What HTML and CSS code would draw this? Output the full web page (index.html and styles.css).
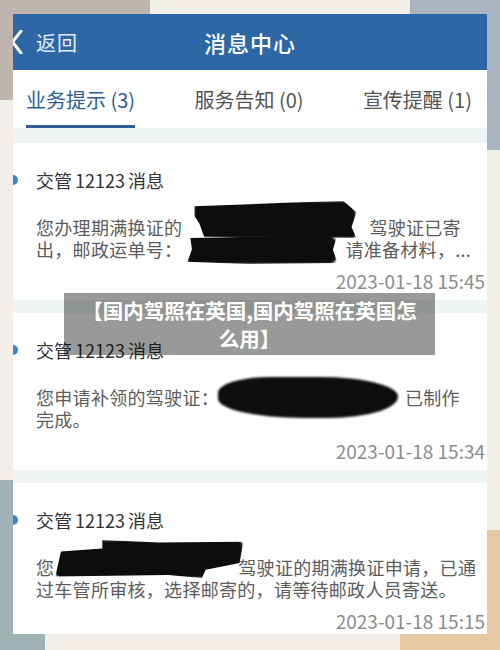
FILE: index.html
```html
<!DOCTYPE html>
<html lang="zh-CN">
<head>
    <meta charset="utf-8">
    <title>消息中心</title>
    <link rel="stylesheet" href="styles.css">
</head>
<body>
    <div class="phone">
        <header class="topbar">
            <div class="back">
                <svg class="chevron" width="12" height="24" viewBox="0 0 12 24">
                    <path d="M10 1 L1.5 12 L10 23" fill="none" stroke="#fff" stroke-width="3" stroke-linecap="round" stroke-linejoin="round"/>
                </svg>
                <span>返回</span>
            </div>
            <h1>消息中心</h1>
            <div></div>
        </header>

        <nav class="tabs">
            <div class="tab active">业务提示 (3)</div>
            <div class="tab">服务告知 (0)</div>
            <div class="tab">宣传提醒 (1)</div>
        </nav>

        <div class="list">
            <div class="card">
                <div class="card-title"><span class="dot"></span>交管 12123 消息</div>
                <div class="card-body">
                    <div class="line">您办理期满换证的<span class="redact r1a"></span>驾驶证已寄</div>
                    <div class="line">出，邮政运单号：<span class="redact r1b"></span>请准备材料，...</div>
                </div>
                <div class="time">2023-01-18 15:45</div>
            </div>

            <div class="card">
                <div class="card-title"><span class="dot"></span>交管 12123 消息</div>
                <div class="card-body">
                    <div class="line">您申请补领的驾驶证：<span class="redact r2"></span>已制作</div>
                    <div class="line">完成。</div>
                </div>
                <div class="time">2023-01-18 15:34</div>
            </div>

            <div class="card">
                <div class="card-title"><span class="dot"></span>交管 12123 消息</div>
                <div class="card-body">
                    <div class="line">您<span class="redact r3"></span>驾驶证的期满换证申请，已通</div>
                    <div class="line">过车管所审核，选择邮寄的，请等待邮政人员寄送。</div>
                </div>
                <div class="time">2023-01-18 15:15</div>
            </div>
        </div>
    </div>

    <div class="caption">【国内驾照在英国,国内驾照在英国怎么用】</div>
</body>
</html>
```

FILE: styles.css
```css
body {
    margin: 0;
    padding: 14px 0 0 13px;
    height: 650px;
    box-sizing: border-box;
    font-family: "Noto Sans CJK SC", "Noto Sans", sans-serif;
    background:
        linear-gradient(#bfb5ae, #bfb5ae) left top / 150px 100px no-repeat,
        linear-gradient(#aab5c1, #aab5c1) right top / 90px 150px no-repeat,
        linear-gradient(#a0b4b6, #a0b4b6) left bottom / 45px 170px no-repeat,
        linear-gradient(#e6c9a4, #e6c9a4) right bottom / 100px 120px no-repeat,
        #f2eee8;
    overflow: hidden;
}

.phone {
    width: 474px;
    height: 620px;
    background: #fff;
    overflow: hidden;
}

.topbar {
    height: 56px;
    background: #2d67a6;
    display: grid;
    grid-template-columns: 1fr auto 1fr;
    align-items: center;
}

.back {
    display: flex;
    align-items: center;
    color: #e3ecf6;
    font-size: 20px;
    letter-spacing: 1px;
}

.chevron {
    margin-left: -2px;
    margin-right: 13px;
}

.topbar h1 {
    margin: 0;
    font-size: 22px;
    font-weight: 500;
    letter-spacing: 1px;
    color: #fff;
}

.tabs {
    display: flex;
    justify-content: space-between;
    padding: 0 15px 0 13px;
    height: 58px;
}

.tab {
    height: 58px;
    box-sizing: border-box;
    padding-top: 18px;
    line-height: 24px;
    font-size: 20px;
    color: #555;
}

.tab.active {
    color: #2d5f96;
    border-bottom: 3px solid #2d5f96;
}

.list {
    background: #eef5f4;
    padding-top: 15px;
    height: 100%;
}

.card {
    background: #fff;
    padding: 25px 2px 7px 23px;
}

.card + .card {
    margin-top: 13px;
}

.card-title {
    display: flex;
    align-items: center;
    font-size: 18px;
    line-height: 24px;
    word-spacing: -1px;
    white-space: pre;
    color: #333;
}

.dot {
    width: 10px;
    height: 10px;
    border-radius: 50%;
    background: #3b82e0;
    margin-left: -28px;
    margin-right: 18px;
}

.card-body {
    margin-top: 24px;
    font-size: 18px;
    line-height: 22px;
    letter-spacing: 0.3px;
    color: #5c5c5c;
}

.line {
    white-space: nowrap;
}

.time {
    margin-top: 9px;
    text-align: right;
    font-size: 19px;
    line-height: 24px;
    color: #8c8c8c;
}

/* black marker strokes over the personal data */
.redact {
    display: inline-block;
    vertical-align: middle;
    background: #0d0d0d;
    filter: blur(1px);
}

.r1a {
    width: 162px;
    height: 37px;
    margin: -27px 13px -6px 12px;
    border-radius: 5px 14px 4px 10px;
    clip-path: polygon(0 14%, 60% 4%, 92% 0, 100% 30%, 97% 70%, 100% 100%, 6% 96%, 3% 60%, 0 40%);
}

.r1b {
    width: 150px;
    height: 29px;
    margin: -15px 8px -10px 5px;
    border-radius: 4px 10px 8px 3px;
    clip-path: polygon(2% 10%, 100% 0, 97% 50%, 100% 96%, 40% 100%, 0 92%, 3% 50%);
}

.r2 {
    width: 180px;
    height: 41px;
    margin: -21px 7px -16px -1px;
    border-radius: 30% 45% 40% 50% / 40% 50% 55% 50%;
}

.r3 {
    width: 188px;
    height: 38px;
    margin: -28px -5px -6px 1px;
    border-radius: 4px 6px 12px 6px;
    clip-path: polygon(25% 0, 55% 6%, 100% 4%, 98% 60%, 80% 78%, 78% 100%, 60% 92%, 0 96%, 3% 30%, 25% 22%);
}

.caption {
    position: absolute;
    left: 64px;
    top: 293px;
    width: 371px;
    height: 62px;
    box-sizing: border-box;
    padding: 3px 12px;
    background: rgba(0, 0, 0, 0.4);
    color: #fff;
    font-size: 20.5px;
    font-weight: 700;
    line-height: 28px;
    text-align: center;
}
```
